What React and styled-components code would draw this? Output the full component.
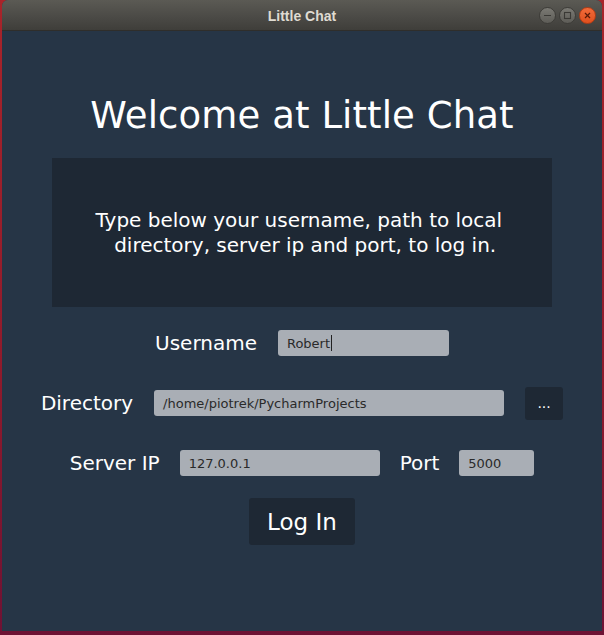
import React from "react";
import styled, { createGlobalStyle } from "styled-components";

const Global = createGlobalStyle`
  html, body { margin: 0; padding: 0; }
  body {
    width: 604px;
    height: 635px;
    overflow: hidden;
    background: linear-gradient(90deg, #6a0f36 0%, #7a1530 50%, #8c1c26 100%);
    font-family: "DejaVu Sans", sans-serif;
  }
`;

const Desktop = styled.div`
  width: 604px;
  height: 635px;
  box-sizing: border-box;
  padding: 0 2px 4px 2px;
  background: linear-gradient(180deg, #a8242a 0%, #8e1a2c 60%, #6e1234 100%);
`;

const Window = styled.div`
  width: 600px;
  height: 631px;
  display: flex;
  flex-direction: column;
  border-radius: 6px 6px 0 0;
  overflow: hidden;
  background: #263546;
`;

const TitleBar = styled.div`
  height: 31px;
  flex: none;
  display: grid;
  grid-template-columns: 1fr auto 1fr;
  align-items: center;
  background: linear-gradient(180deg, #5b5a54 0%, #4a4945 60%, #3f3e3a 100%);
  border-bottom: 1px solid #2f2e2b;
  box-sizing: border-box;
`;

const Title = styled.div`
  grid-column: 2;
  font-family: "Liberation Sans", sans-serif;
  font-weight: bold;
  font-size: 14px;
  color: #dfdbd2;
  padding-top: 1px;
`;

const Controls = styled.div`
  grid-column: 3;
  justify-self: end;
  display: flex;
  gap: 3px;
  padding-right: 6px;
  padding-top: 1px;
`;

const Ctl = styled.div`
  width: 17px;
  height: 17px;
  border-radius: 50%;
  box-sizing: border-box;
  display: flex;
  align-items: center;
  justify-content: center;
  background: ${(p) =>
    p.$close
      ? "linear-gradient(180deg, #f26b3a 0%, #e0501e 100%)"
      : "linear-gradient(180deg, #7a7973 0%, #5d5c57 100%)"};
  border: 1px solid ${(p) => (p.$close ? "#b43c14" : "#3d3c38")};
`;

const Content = styled.div`
  flex: 1;
  display: flex;
  flex-direction: column;
  align-items: center;
  color: #ffffff;
`;

const Heading = styled.h1`
  margin: 63px 0 0 0;
  font-weight: normal;
  font-size: 37px;
  line-height: 44px;
  letter-spacing: 0.1px;
`;

const InfoBox = styled.div`
  margin-top: 20px;
  width: 500px;
  height: 149px;
  background: #1e2834;
  display: flex;
  align-items: center;
  justify-content: center;
  text-align: center;
  font-size: 20px;
  line-height: 25px;
  padding-top: 1px;
  box-sizing: border-box;
  white-space: pre;
`;

const Form = styled.div`
  margin-top: 19px;
  display: flex;
  flex-direction: column;
  align-items: center;
  gap: 26px;
`;

const Row = styled.div`
  height: 34px;
  display: flex;
  align-items: center;
  gap: ${(p) => p.$gap || 20}px;
`;

const Label = styled.span`
  font-size: 20px;
  color: #ffffff;
`;

const Field = styled.div`
  width: ${(p) => p.$w}px;
  height: 26px;
  box-sizing: border-box;
  border-radius: 3px;
  background: #a9aeb5;
  color: #2a2a2a;
  font-size: 13px;
  display: flex;
  align-items: center;
  padding-left: ${(p) => p.$pad || 9}px;
`;

const Caret = styled.span`
  display: inline-block;
  width: 1px;
  height: 16px;
  background: #222;
  margin-left: 1px;
`;

const DarkButton = styled.div`
  background: #1e2834;
  border-radius: 3px;
  color: #ffffff;
  display: flex;
  align-items: center;
  justify-content: center;
  box-sizing: border-box;
  width: ${(p) => p.$w}px;
  height: ${(p) => p.$h}px;
  font-size: ${(p) => p.$fs}px;
`;

const LoginWrap = styled.div`
  margin-top: 18px;
`;

export default function App() {
  return (
    <>
      <Global />
      <Desktop>
        <Window>
          <TitleBar>
            <Title>Little Chat</Title>
            <Controls>
              <Ctl>
                <svg width="9" height="9" viewBox="0 0 9 9">
                  <line x1="1" y1="4.5" x2="8" y2="4.5" stroke="#3a3935" strokeWidth="1.2" />
                </svg>
              </Ctl>
              <Ctl>
                <svg width="9" height="9" viewBox="0 0 9 9">
                  <rect x="1.5" y="1.5" width="6" height="6" fill="none" stroke="#3a3935" strokeWidth="1.1" />
                </svg>
              </Ctl>
              <Ctl $close>
                <svg width="9" height="9" viewBox="0 0 9 9">
                  <line x1="2" y1="2" x2="7" y2="7" stroke="#5a1a08" strokeWidth="1.3" />
                  <line x1="7" y1="2" x2="2" y2="7" stroke="#5a1a08" strokeWidth="1.3" />
                </svg>
              </Ctl>
            </Controls>
          </TitleBar>
          <Content>
            <Heading>Welcome at Little Chat</Heading>
            <InfoBox>{"Type below your username, path to local \n directory, server ip and port, to log in."}</InfoBox>
            <Form>
              <Row $gap={21}>
                <Label>Username</Label>
                <Field $w={171}>
                  Robert
                  <Caret />
                </Field>
              </Row>
              <Row $gap={21}>
                <Label>Directory</Label>
                <Field $w={350}>/home/piotrek/PycharmProjects</Field>
                <DarkButton $w={38} $h={33} $fs={14}>...</DarkButton>
              </Row>
              <Row $gap={20}>
                <Label>Server IP</Label>
                <Field $w={200}>127.0.0.1</Field>
                <Label>Port</Label>
                <Field $w={75}>5000</Field>
              </Row>
            </Form>
            <LoginWrap>
              <DarkButton $w={106} $h={47} $fs={23}>Log In</DarkButton>
            </LoginWrap>
          </Content>
        </Window>
      </Desktop>
    </>
  );
}
